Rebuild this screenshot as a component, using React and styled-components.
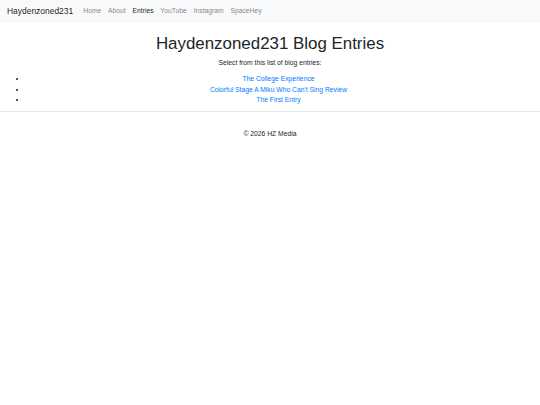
import React from 'react';
import styled, { createGlobalStyle } from 'styled-components';

const GlobalStyle = createGlobalStyle`
  body {
    margin: 0;
    font-family: "Liberation Sans", Arial, sans-serif;
    font-size: 6.75px;
    line-height: 1.5;
    color: #212529;
    background: #fff;
  }
`;

const Navbar = styled.nav`
  display: flex;
  align-items: center;
  height: 23px;
  padding: 0 7px;
  background-color: #f8f9fa;
`;

const Brand = styled.a`
  font-size: 8.45px;
  line-height: 1;
  color: rgba(0, 0, 0, 0.9);
  margin-right: 6.75px;
  text-decoration: none;
`;

const NavLinks = styled.ul`
  display: flex;
  align-items: center;
  list-style: none;
  margin: 0;
  padding: 0;
`;

const NavLink = styled.a`
  display: block;
  padding: 0 3.4px;
  line-height: 1;
  text-decoration: none;
  color: ${(p) => (p.$active ? 'rgba(0, 0, 0, 0.9)' : 'rgba(0, 0, 0, 0.5)')};
`;

const Main = styled.main`
  text-align: center;
  padding-top: 11px;
`;

const Title = styled.h1`
  font-size: 16.9px;
  font-weight: 400;
  margin: 0 0 4px;
  line-height: 20px;
`;

const Lead = styled.p`
  margin: 0 0 6px;
  line-height: 10px;
`;

const EntryList = styled.ul`
  margin: 0;
  padding: 0 10px 0 27px;
  line-height: 10.5px;
`;

const EntryLink = styled.a`
  color: #007bff;
  text-decoration: none;
`;

const Divider = styled.hr`
  border: 0;
  border-top: 1px solid rgba(0, 0, 0, 0.1);
  margin: 5.5px 0 0;
`;

const Footer = styled.footer`
  text-align: center;
  padding-top: 17px;
  line-height: 10px;
`;

const entries = [
  'The College Experience',
  "Colorful Stage A Miku Who Can't Sing Review",
  'The First Entry',
];

const links = ['Home', 'About', 'Entries', 'YouTube', 'Instagram', 'SpaceHey'];

export default function App() {
  return (
    <>
      <GlobalStyle />
      <Navbar>
        <Brand href="#">Haydenzoned231</Brand>
        <NavLinks>
          {links.map((l) => (
            <li key={l}>
              <NavLink href="#" $active={l === 'Entries'}>{l}</NavLink>
            </li>
          ))}
        </NavLinks>
      </Navbar>
      <Main>
        <Title>Haydenzoned231 Blog Entries</Title>
        <Lead>Select from this list of blog entries:</Lead>
        <EntryList>
          {entries.map((e) => (
            <li key={e}>
              <EntryLink href="#">{e}</EntryLink>
            </li>
          ))}
        </EntryList>
      </Main>
      <Divider />
      <Footer>© 2026 HZ Media</Footer>
    </>
  );
}
